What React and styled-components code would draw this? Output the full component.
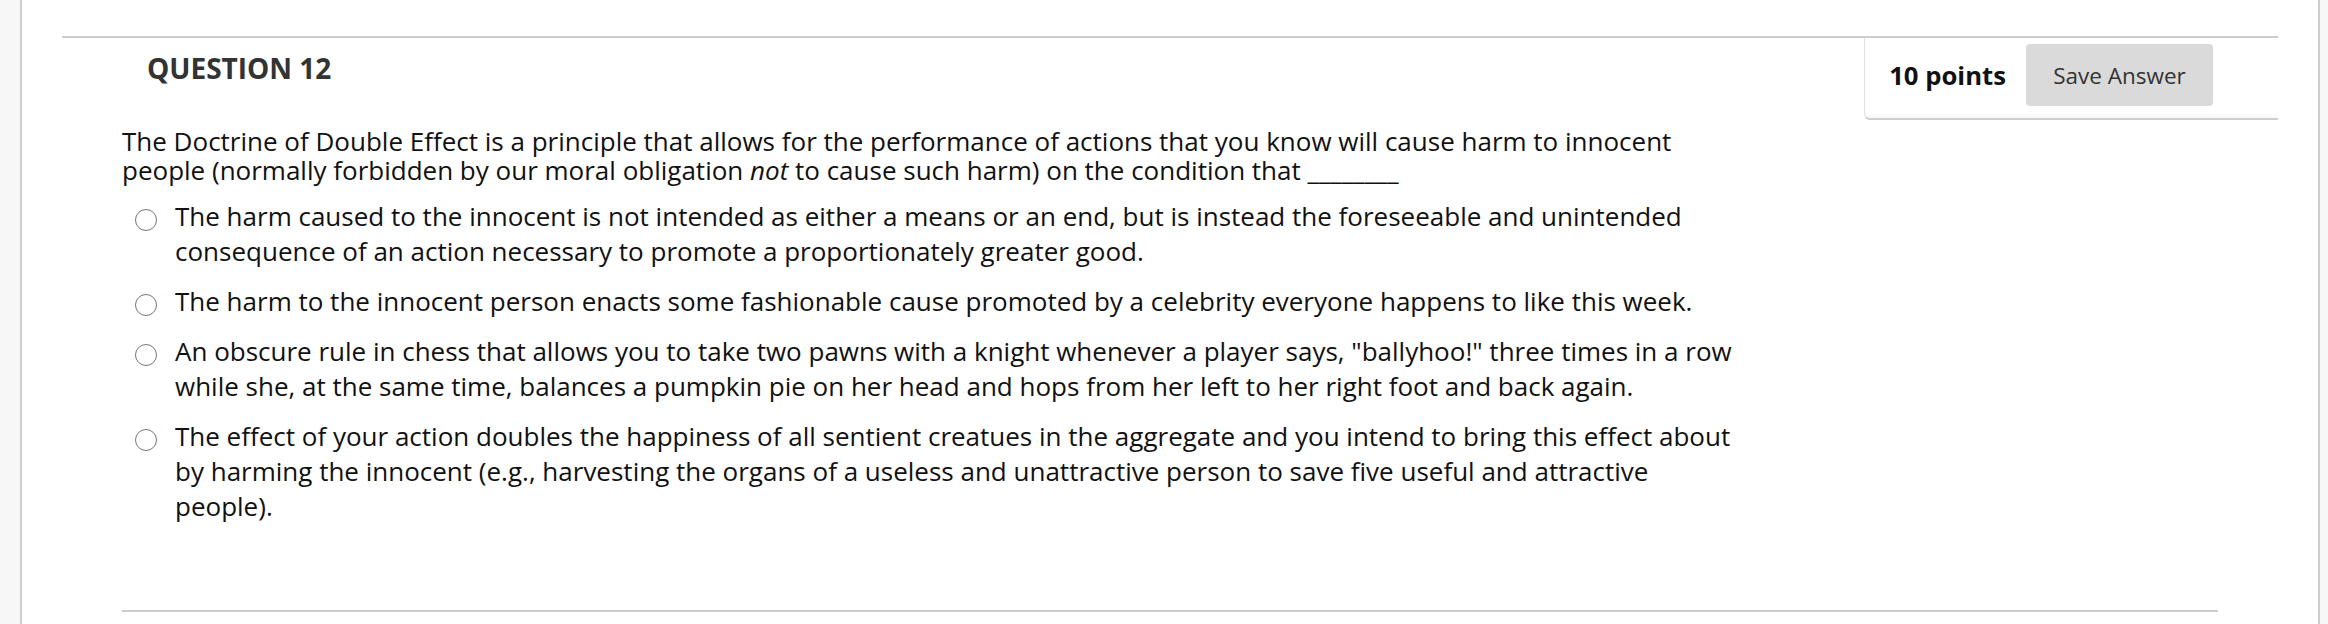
import styled, { createGlobalStyle } from 'styled-components';

const GlobalStyle = createGlobalStyle`
  html, body {
    margin: 0;
    padding: 0;
    background: #f7f7f7;
  }
  body {
    font-family: "Open Sans", "Liberation Sans", Arial, sans-serif;
    color: #111;
  }
`;

const options = [
    'The harm caused to the innocent is not intended as either a means or an end, but is instead the foreseeable and unintended consequence of an action necessary to promote a proportionately greater good.',
    'The harm to the innocent person enacts some fashionable cause promoted by a celebrity everyone happens to like this week.',
    'An obscure rule in chess that allows you to take two pawns with a knight whenever a player says, "ballyhoo!" three times in a row while she, at the same time, balances a pumpkin pie on her head and hops from her left to her right foot and back again.',
    'The effect of your action doubles the happiness of all sentient creatues in the aggregate and you intend to bring this effect about by harming the innocent (e.g., harvesting the organs of a useless and unattractive person to save five useful and attractive people).',
];

const App = () => {
    return (
        <>
            <GlobalStyle />
            <Page>
                <Question>
                    <Header>
                        <Title>QUESTION 12</Title>
                        <PointsBox>
                            <Points>10 points</Points>
                            <SaveButton type="button">Save Answer</SaveButton>
                        </PointsBox>
                    </Header>
                    <Body>
                        <Stem>
                            The Doctrine of Double Effect is a principle that allows for the performance of actions that you know will cause harm to innocent people (normally forbidden by our moral obligation <em>not</em> to cause such harm) on the condition that ________
                        </Stem>
                        <Options>
                            {options.map((text, i) => (
                                <Option key={i}>
                                    <Radio type="radio" name="q12" />
                                    <OptionText>{text}</OptionText>
                                </Option>
                            ))}
                        </Options>
                    </Body>
                    <Divider />
                </Question>
            </Page>
        </>
    )
}

const Page = styled.div`
    box-sizing: border-box;
    display: flex;
    flex-direction: column;
    height: 624px;
    margin: 0 8px 0 20px;
    padding: 36px 40px 12px;
    background: #fff;
    border-left: 2px solid #cdcdcd;
    border-right: 2px solid #cdcdcd;
`;

const Question = styled.section`
    flex: 1;
    display: flex;
    flex-direction: column;
    border-top: 2px solid #cdcdcd;
`;

const Header = styled.div`
    display: flex;
    justify-content: space-between;
    align-items: flex-start;
`;

const Title = styled.h3`
    margin: 0;
    padding: 13px 0 0 85px;
    font-size: 28px;
    line-height: 34px;
    font-weight: 700;
    color: #333;
`;

const PointsBox = styled.div`
    display: flex;
    align-items: center;
    gap: 20px;
    padding: 6px 65px 12px 24px;
    border-left: 1px solid #e2e2e2;
    border-bottom: 2px solid #cdcdcd;
    border-bottom-left-radius: 6px;
    box-shadow: inset 0 -8px 8px -8px rgba(0, 0, 0, 0.06);
`;

const Points = styled.span`
    font-size: 25.7px;
    font-weight: 700;
    color: #111;
`;

const SaveButton = styled.button`
    width: 187px;
    height: 62px;
    border: none;
    border-radius: 4px;
    background: #dadada;
    color: #333;
    font-family: inherit;
    font-size: 22.5px;
    cursor: pointer;
`;

const Body = styled.div`
    width: 1622px;
    margin: 7px 0 0 60px;
`;

const Stem = styled.p`
    margin: 0;
    font-size: 26px;
    line-height: 29px;

    em {
        font-style: italic;
    }
`;

const Options = styled.ul`
    list-style: none;
    margin: 14px 0 0;
    padding: 0 0 0 13px;
    display: flex;
    flex-direction: column;
    gap: 15px;
`;

const Option = styled.li`
    display: flex;
    align-items: flex-start;
    gap: 18px;
`;

const Radio = styled.input`
    appearance: none;
    flex: none;
    box-sizing: border-box;
    width: 22px;
    height: 22px;
    margin: 10px 0 0;
    border: 1.5px solid #757575;
    border-radius: 50%;
    background: #fff;
`;

const OptionText = styled.span`
    font-size: 26px;
    line-height: 35px;
`;

const Divider = styled.hr`
    margin: auto 60px 0;
    border: none;
    border-top: 2px solid #cdcdcd;
    height: 0;
`;

export default App;
